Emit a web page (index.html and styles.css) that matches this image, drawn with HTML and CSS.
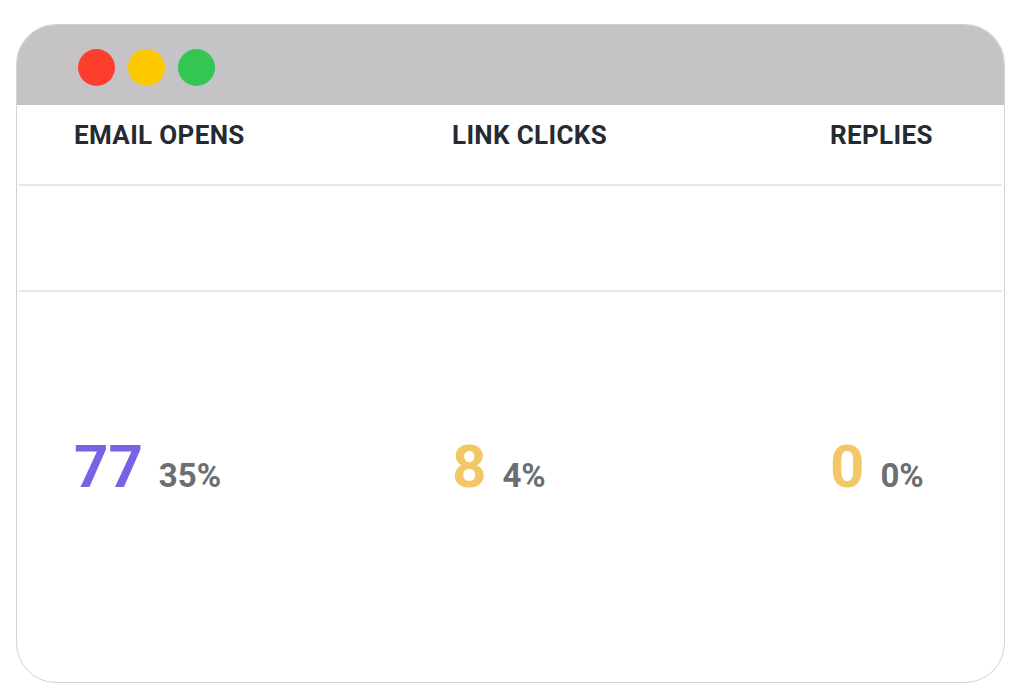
FILE: index.html
```html
<!DOCTYPE html>
<html lang="en">
<head>
<meta charset="utf-8">
<title>Email stats</title>
<link rel="stylesheet" href="styles.css">
</head>
<body>
<div class="window">
  <div class="titlebar">
    <span class="dot red"></span>
    <span class="dot yellow"></span>
    <span class="dot green"></span>
  </div>
  <div class="row head">
    <div class="cell">EMAIL OPENS</div>
    <div class="cell">LINK CLICKS</div>
    <div class="cell">REPLIES</div>
  </div>
  <div class="row empty"></div>
  <div class="row stats">
    <div class="cell stat"><span class="num purple">77</span><span class="pct">35%</span></div>
    <div class="cell stat"><span class="num gold">8</span><span class="pct">4%</span></div>
    <div class="cell stat"><span class="num gold">0</span><span class="pct">0%</span></div>
  </div>
</div>
</body>
</html>
```
FILE: styles.css
```css
* { box-sizing: border-box; }
html, body { margin: 0; padding: 0; background: #ffffff; }
body { font-family: Roboto, "Liberation Sans", Arial, sans-serif; }

.window {
  margin: 24px 0 0 16px;
  width: 989px;
  height: 659px;
  border: 1px solid #d2d2d4;
  border-radius: 40px;
  overflow: hidden;
  display: flex;
  flex-direction: column;
  background: #ffffff;
}

.titlebar {
  height: 80px;
  flex: none;
  background: #c6c3c6;
  display: flex;
  align-items: center;
  gap: 13px;
  padding: 4px 0 0 61px;
}

.dot {
  width: 37px;
  height: 37px;
  border-radius: 50%;
  display: block;
}
.red { background: #fc3f2c; }
.yellow { background: #fec800; }
.green { background: #34c553; }

.row {
  display: grid;
  grid-template-columns: 378px 378px 378px;
  padding-left: 55px;
  margin: 0 2px;
  flex: none;
}

.head {
  height: 81px;
  padding-top: 17px;
  border-bottom: 2px solid #e8e8e9;
}
.head .cell {
  font-size: 26px;
  line-height: 26px;
  font-weight: 700;
  letter-spacing: 0.35px;
  color: #252a33;
  white-space: nowrap;
}

.empty {
  height: 106px;
  border-bottom: 2px solid #e8e8e9;
}

.stats {
  flex: 1;
  padding-top: 145px;
  align-items: start;
}

.stat {
  display: flex;
  align-items: baseline;
  gap: 16px;
  white-space: nowrap;
}

.num {
  font-size: 60px;
  line-height: 60px;
  font-weight: 700;
}
.purple { color: #7a61e6; }
.gold { color: #f4c766; }

.pct {
  font-size: 33px;
  font-weight: 700;
  color: #6b6e72;
}
```
